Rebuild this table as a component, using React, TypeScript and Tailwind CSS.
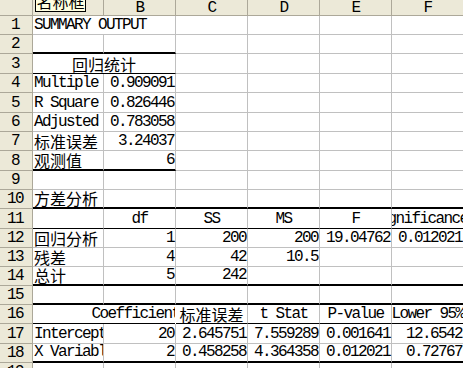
import React from 'react';

// Excel 2003 style sheet: regression summary output

type Cell = {
  t?: string;
  a?: 'l' | 'r' | 'c';
  z?: boolean; // chinese text
  nr?: boolean; // no right gridline (text runs over it)
  clip?: 'x' | 'l' | 'r';
  wide?: boolean; // spans A and B
};

type Row = { h: string; b?: string[]; cells: Cell[] };

const LAT = "font-['Liberation_Mono',monospace] text-[16px] tracking-[-1.6px]";
const CJK = "font-['Noto_Sans_CJK_SC',sans-serif] text-[16px]";

const COLS = ['A', 'B', 'C', 'D', 'E', 'F'];
const WIDTHS = ['w-[71px]', 'w-[72px]', 'w-[72px]', 'w-[72px]', 'w-[72px]', 'w-[72px]'];

const E: Cell = {};
const L = (t: string): Cell => ({ t });
const R = (t: string): Cell => ({ t, a: 'r' });
const Z = (t: string): Cell => ({ t, z: true });
const C = (t: string): Cell => ({ t, a: 'c' });

const ab = ['t', 't', 'g', 'g', 'g', 'g'];
const all = ['t', 't', 't', 't', 't', 't'];
const thin = ['k', 'k', 'k', 'k', 'k', 'k'];

const rows: Row[] = [
  { h: 'h-[19px]', cells: [{ t: 'SUMMARY OUTPUT', nr: true }, E, E, E, E, E] },
  { h: 'h-[19px]', b: ab, cells: [E, E, E, E, E, E] },
  { h: 'h-[20px]', b: ['k', 'g', 'g', 'g', 'g'], cells: [{ t: '回归统计', z: true, a: 'c', wide: true }, E, E, E, E] },
  { h: 'h-[19px]', cells: [L('Multiple'), R('0.909091'), E, E, E, E] },
  { h: 'h-[20px]', cells: [L('R Square'), R('0.826446'), E, E, E, E] },
  { h: 'h-[19px]', cells: [L('Adjusted'), R('0.783058'), E, E, E, E] },
  { h: 'h-[19px]', cells: [Z('标准误差'), R('3.24037'), E, E, E, E] },
  { h: 'h-[20px]', b: ab, cells: [Z('观测值'), R('6'), E, E, E, E] },
  { h: 'h-[19px]', cells: [E, E, E, E, E, E] },
  { h: 'h-[19px]', b: all, cells: [Z('方差分析'), E, E, E, E, E] },
  { h: 'h-[20px]', b: thin, cells: [E, C('df'), C('SS'), C('MS'), C('F'), { t: 'Significance F', a: 'c', clip: 'l' }] },
  { h: 'h-[19px]', cells: [Z('回归分析'), R('1'), R('200'), R('200'), R('19.04762'), R('0.012021')] },
  { h: 'h-[19px]', cells: [Z('残差'), R('4'), R('42'), R('10.5'), E, E] },
  { h: 'h-[19px]', b: all, cells: [Z('总计'), R('5'), R('242'), E, E, E] },
  { h: 'h-[19px]', b: all, cells: [E, E, E, E, E, E] },
  {
    h: 'h-[19px]',
    b: thin,
    cells: [{ nr: true }, { t: 'Coefficients', a: 'c', clip: 'r' }, { t: '标准误差', z: true, a: 'c' }, C('t Stat'), C('P-value'), C('Lower 95%')],
  },
  { h: 'h-[20px]', cells: [{ t: 'Intercept', clip: 'x' }, R('20'), R('2.645751'), R('7.559289'), R('0.001641'), R('12.6542')] },
  { h: 'h-[19px]', b: all, cells: [{ t: 'X Variable', clip: 'x' }, R('2'), R('0.458258'), R('4.364358'), R('0.012021'), R('0.72767')] },
  { h: 'h-[19px]', cells: [E, E, E, E, E, E] },
];

function SheetCell({ c, w, b }: { c: Cell; w: string; b?: string }) {
  const bb =
    b === 't' ? 'border-b-2 border-b-black' : b === 'k' ? 'border-b border-b-black' : 'border-b border-b-[#c0c0c0]';
  const br = c.nr ? '' : 'border-r border-r-[#c0c0c0]';
  const just =
    c.a === 'r' ? 'justify-end pr-[1px]' : c.a === 'c' ? 'justify-center' : 'justify-start pl-[1px]';
  const clip =
    c.clip === 'x'
      ? 'overflow-hidden'
      : c.clip === 'l'
        ? '[clip-path:inset(0_-300px_0_0)]'
        : c.clip === 'r'
          ? '[clip-path:inset(0_1px_0_-300px)]'
          : '';
  return (
    <div className={`flex h-full shrink-0 items-end whitespace-nowrap ${w} ${bb} ${br} ${just} ${clip}`}>
      {c.t && <span className={`${c.z ? CJK : LAT} leading-[17px]`}>{c.t}</span>}
    </div>
  );
}

export default function App() {
  return (
    <div className="relative h-[368px] w-[463px] overflow-hidden bg-white text-black">
      {/* column headers */}
      <div className="flex h-[16px] w-max">
        <div className="h-full w-[33px] shrink-0 border-b border-r border-[#aca899] bg-[#ece9d8]" />
        {COLS.map((col, i) => (
          <div
            key={col}
            className={`flex h-full shrink-0 items-center justify-center border-b border-r border-[#aca899] bg-[#ece9d8] ${WIDTHS[i]}`}
          >
            <span className={`${LAT} leading-[14px]`}>{col}</span>
          </div>
        ))}
      </div>

      {rows.map((row, r) => {
        let col = 0;
        return (
          <div key={r} className={`flex w-max ${row.h}`}>
            <div className="flex h-full w-[33px] shrink-0 items-end justify-center border-b border-r border-[#aca899] bg-[#ece9d8] pr-[2px]">
              <span className={`${LAT} leading-[17px]`}>{r + 1}</span>
            </div>
            {row.cells.map((c, i) => {
              const w = c.wide ? 'w-[143px]' : WIDTHS[col];
              col += c.wide ? 2 : 1;
              return <SheetCell key={i} c={c} w={w} b={row.b?.[i]} />;
            })}
          </div>
        );
      })}

      {/* name box tooltip, mostly scrolled off the top */}
      <div className="absolute left-[35px] top-[-9px] flex h-[21px] w-[51px] items-center justify-center border border-black bg-[#ffffe1]">
        <span className={`${CJK} leading-[15px]`}>名称框</span>
      </div>
    </div>
  );
}
